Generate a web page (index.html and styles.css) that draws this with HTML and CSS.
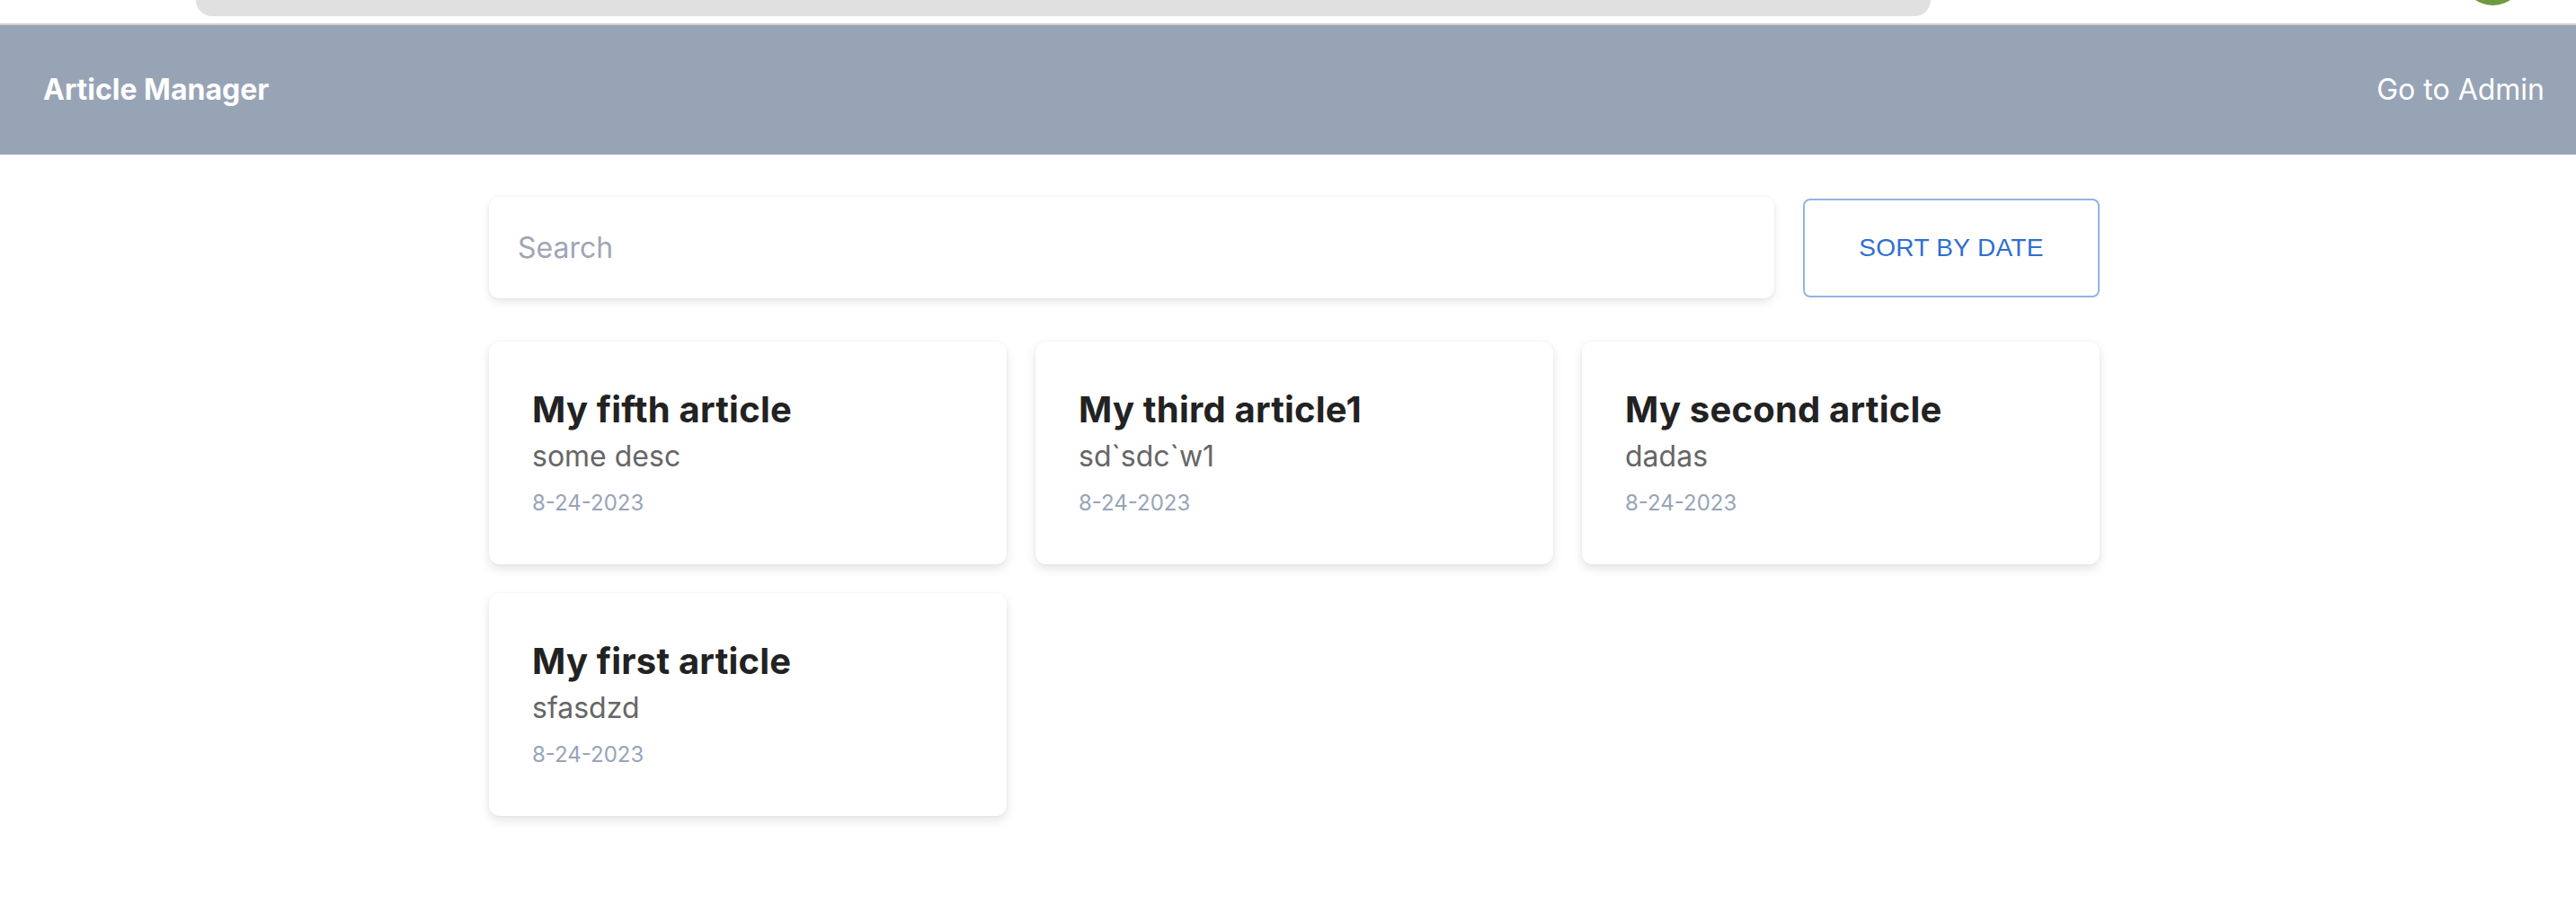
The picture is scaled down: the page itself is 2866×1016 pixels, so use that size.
FILE: index.html
```html
<!DOCTYPE html>
<html lang="en">
<head>
<meta charset="utf-8">
<title>Article Manager</title>
<link rel="stylesheet" href="styles.css">
</head>
<body>
  <div class="chrome">
    <div class="chrome-pill"></div>
    <div class="chrome-dot"></div>
  </div>
  <header class="appbar">
    <div class="brand">Article Manager</div>
    <a class="admin-link">Go to Admin</a>
  </header>
  <main class="container">
    <div class="toolbar">
      <div class="search"><span class="placeholder">Search</span></div>
      <button class="sort-btn">SORT BY DATE</button>
    </div>
    <section class="grid">
      <article class="card">
        <h2 class="card-title">My fifth article</h2>
        <p class="card-desc">some desc</p>
        <p class="card-date">8-24-2023</p>
      </article>
      <article class="card">
        <h2 class="card-title">My third article1</h2>
        <p class="card-desc">sd`sdc`w1</p>
        <p class="card-date">8-24-2023</p>
      </article>
      <article class="card">
        <h2 class="card-title">My second article</h2>
        <p class="card-desc">dadas</p>
        <p class="card-date">8-24-2023</p>
      </article>
      <article class="card">
        <h2 class="card-title">My first article</h2>
        <p class="card-desc">sfasdzd</p>
        <p class="card-date">8-24-2023</p>
      </article>
    </section>
  </main>
</body>
</html>
```

FILE: styles.css
```css
* { box-sizing: border-box; }

html, body {
  margin: 0;
  padding: 0;
  background: #ffffff;
  font-family: Inter, "Noto Sans", sans-serif;
}

.chrome {
  position: relative;
  height: 28px;
  border-bottom: 2px solid #d0d0d0;
  background: #ffffff;
  overflow: hidden;
}

.chrome-pill {
  margin-left: 218px;
  width: 1930px;
  height: 18px;
  background: #e0e0e0;
  border-radius: 0 0 30px 30px;
}

.chrome-dot {
  position: absolute;
  left: 2739px;
  top: -63px;
  width: 69px;
  height: 69px;
  border-radius: 50%;
  background: #6c9a3c;
}

.appbar {
  height: 144px;
  background: #97a4b6;
  display: flex;
  align-items: center;
  justify-content: space-between;
  padding: 0 35px 0 48px;
  color: #ffffff;
}

.brand {
  font-size: 32px;
  font-weight: 700;
  line-height: 40px;
}

.admin-link {
  font-size: 32px;
  font-weight: 400;
  line-height: 40px;
  color: #ffffff;
  text-decoration: none;
}

.container {
  width: 1792px;
  margin-left: calc(50% - 889px);
  padding-top: 47px;
  padding-bottom: 80px;
}

.toolbar {
  display: flex;
  align-items: center;
  gap: 32px;
}

.search {
  flex: 1;
  height: 113px;
  border-radius: 12px;
  background: #ffffff;
  box-shadow: 0 4px 10px rgba(0, 0, 0, 0.10), 0 0 3px rgba(0, 0, 0, 0.05);
  display: flex;
  align-items: center;
  padding: 0 32px;
}

.placeholder {
  font-size: 32px;
  line-height: 40px;
  color: #a0a6b4;
}

.sort-btn {
  width: 330px;
  height: 110px;
  background: #ffffff;
  border: 2px solid #94b4e4;
  border-radius: 8px;
  color: #2f6fd0;
  font-family: "Liberation Sans", Arial, sans-serif;
  font-size: 28px;
  letter-spacing: 0.3px;
  padding: 0;
  cursor: pointer;
}

.grid {
  margin-top: 48px;
  display: grid;
  grid-template-columns: repeat(3, 576px);
  gap: 32px;
}

.card {
  height: 248px;
  background: #ffffff;
  border-radius: 12px;
  box-shadow: 0 5px 12px rgba(0, 0, 0, 0.11), 0 0 3px rgba(0, 0, 0, 0.05);
  padding: 48px 48px 50px;
}

.card-title {
  margin: 0;
  font-size: 40px;
  font-weight: 700;
  line-height: 56px;
  color: #222222;
  letter-spacing: 0.2px;
}

.card-desc {
  margin: 0;
  font-size: 32px;
  line-height: 48px;
  color: #666666;
}

.card-date {
  margin: 10px 0 0;
  font-size: 24px;
  line-height: 36px;
  color: #97a4b9;
}
```
